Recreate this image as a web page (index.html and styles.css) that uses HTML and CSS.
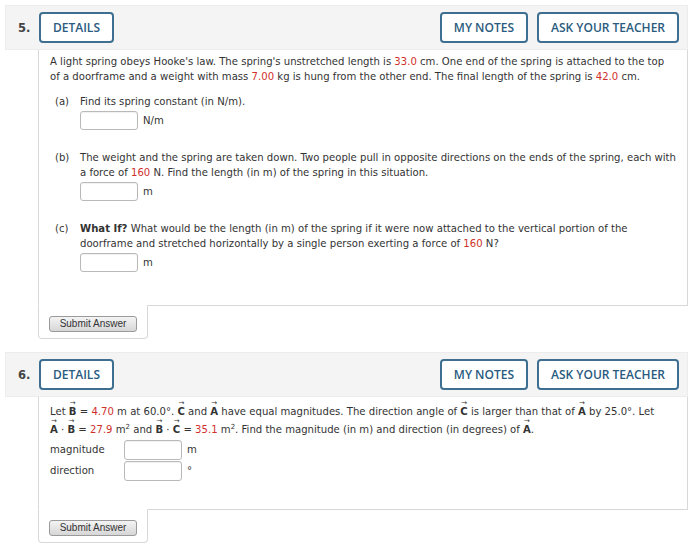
FILE: index.html
```html
<!DOCTYPE html>
<html lang="en">
<head>
  <meta charset="UTF-8">
  <title>Assignment</title>
  <link rel="stylesheet" href="styles.css">
</head>
<body>
  <div class="page">

    <div class="question">
      <div class="q-head">
        <span class="q-num">5.</span>
        <button class="q-btn">DETAILS</button>
        <div class="q-tools">
          <button class="q-btn">MY NOTES</button>
          <button class="q-btn">ASK YOUR TEACHER</button>
        </div>
      </div>
      <div class="q-body q5">
        <p class="intro">A light spring obeys Hooke's law. The spring's unstretched length is <span class="val">33.0</span> cm. One end of the spring is attached to the top of a doorframe and a weight with mass <span class="val">7.00</span> kg is hung from the other end. The final length of the spring is <span class="val">42.0</span> cm.</p>

        <div class="part">
          <span class="part-label">(a)</span>
          <div class="part-main">
            <p>Find its spring constant (in N/m).</p>
            <div class="answer"><span class="box"></span><span class="unit">N/m</span></div>
          </div>
        </div>

        <div class="part">
          <span class="part-label">(b)</span>
          <div class="part-main">
            <p>The weight and the spring are taken down. Two people pull in opposite directions on the ends of the spring, each with a force of <span class="val">160</span> N. Find the length (in m) of the spring in this situation.</p>
            <div class="answer"><span class="box"></span><span class="unit">m</span></div>
          </div>
        </div>

        <div class="part">
          <span class="part-label">(c)</span>
          <div class="part-main">
            <p><b>What If?</b> What would be the length (in m) of the spring if it were now attached to the vertical portion of the doorframe and stretched horizontally by a single person exerting a force of <span class="val">160</span> N?</p>
            <div class="answer"><span class="box"></span><span class="unit">m</span></div>
          </div>
        </div>
      </div>
      <div class="q-submit"><button class="submit">Submit Answer</button></div>
    </div>

    <div class="question">
      <div class="q-head">
        <span class="q-num">6.</span>
        <button class="q-btn">DETAILS</button>
        <div class="q-tools">
          <button class="q-btn">MY NOTES</button>
          <button class="q-btn">ASK YOUR TEACHER</button>
        </div>
      </div>
      <div class="q-body q6">
        <p class="intro vec-text">Let <span class="vec">B</span> = <span class="val">4.70</span> m at 60.0&deg;. <span class="vec">C</span> and <span class="vec">A</span> have equal magnitudes. The direction angle of <span class="vec">C</span> is larger than that of <span class="vec">A</span> by 25.0&deg;. Let <span class="vec">A</span> &middot; <span class="vec">B</span> = <span class="val">27.9</span> m<sup>2</sup> and <span class="vec">B</span> &middot; <span class="vec">C</span> = <span class="val">35.1</span> m<sup>2</sup>. Find the magnitude (in m) and direction (in degrees) of <span class="vec">A</span>.</p>

        <div class="field-row">
          <span class="field-label">magnitude</span>
          <span class="box"></span><span class="unit">m</span>
        </div>
        <div class="field-row">
          <span class="field-label">direction</span>
          <span class="box"></span><span class="unit">&deg;</span>
        </div>
      </div>
      <div class="q-submit"><button class="submit">Submit Answer</button></div>
    </div>

  </div>
</body>
</html>
```

FILE: styles.css
```css
body {
  margin: 0;
  background: #fff;
  font-family: "DejaVu Sans", Verdana, sans-serif;
  font-size: 10.1px;
  color: #333;
}

.page {
  padding: 5px 12px 0 5px;
}

.question {
  margin-bottom: 13px;
}

/* header band */
.q-head {
  display: flex;
  align-items: center;
  height: 45px;
  box-sizing: border-box;
  padding: 0 8px 0 12px;
  background: #f4f4f4;
  border: 1px solid #ececec;
}

.q-num {
  width: 21px;
  font-weight: bold;
  font-size: 11.5px;
  color: #444;
}

.q-tools {
  margin-left: auto;
  display: flex;
  gap: 9px;
}

.q-btn {
  height: 31px;
  padding: 0 12px;
  font-family: "Open Sans", sans-serif;
  font-weight: 600;
  font-size: 12px;
  color: #2a5b80;
  background: #fff;
  border: 2px solid #3e6f90;
  border-radius: 4px;
}

/* question body */
.q-body {
  margin-left: 33px;
  padding: 4px 6px 33px 11px;
  line-height: 15px;
  border-left: 1px solid #d8d8d8;
  border-right: 1px solid #d8d8d8;
  border-bottom: 1px solid #d8d8d8;
}

.q-body p {
  margin: 0;
}

.q5 .intro {
  margin-right: 6px;
  margin-bottom: 10px;
}

.val {
  color: #d0302c;
}

.part {
  display: flex;
  margin-left: 5px;
  margin-bottom: 20px;
}

.part:last-child {
  margin-bottom: 0;
}

.part-label {
  width: 25px;
  flex-shrink: 0;
}

.answer {
  display: flex;
  align-items: center;
  margin-top: 2px;
}

.box {
  display: inline-block;
  width: 56px;
  height: 17px;
  border: 1px solid #b9b9b9;
  border-radius: 3px;
  background: #fff;
  box-shadow: inset 0 1px 1px rgba(0, 0, 0, 0.06);
}

.unit {
  margin-left: 5px;
}

/* vectors */
.vec-text {
  line-height: 18px;
}

.vec {
  position: relative;
  font-weight: bold;
}

.vec::before {
  content: "\2192";
  position: absolute;
  left: 1px;
  top: -6px;
  font-size: 7px;
  font-weight: normal;
  line-height: 7px;
}

sup {
  font-size: 7px;
  line-height: 0;
}

.q6 {
  padding-top: 6px;
  padding-bottom: 28px;
}

.q6 .intro {
  margin-right: 16px;
  margin-bottom: 0;
}

.field-row {
  display: flex;
  align-items: center;
  height: 21px;
}

.field-label {
  width: 74px;
}

.field-row .box {
  height: 18px;
}

/* submit tab */
.q-submit {
  position: relative;
  margin-left: 33px;
  margin-top: -1px;
  width: 110px;
  box-sizing: border-box;
  padding: 10px 0 6px 10px;
  background: #fff;
  border: 1px solid #d8d8d8;
  border-top: 1px solid #fff;
  border-radius: 0 0 4px 4px;
}

.submit {
  display: block;
  width: 88px;
  height: 16px;
  padding: 0;
  font-family: "Liberation Sans", Arial, sans-serif;
  font-size: 10px;
  line-height: 14px;
  color: #333;
  background: linear-gradient(#f4f4f4, #d6d6d6);
  border: 1px solid #9a9a9a;
  border-radius: 3px;
}
```
